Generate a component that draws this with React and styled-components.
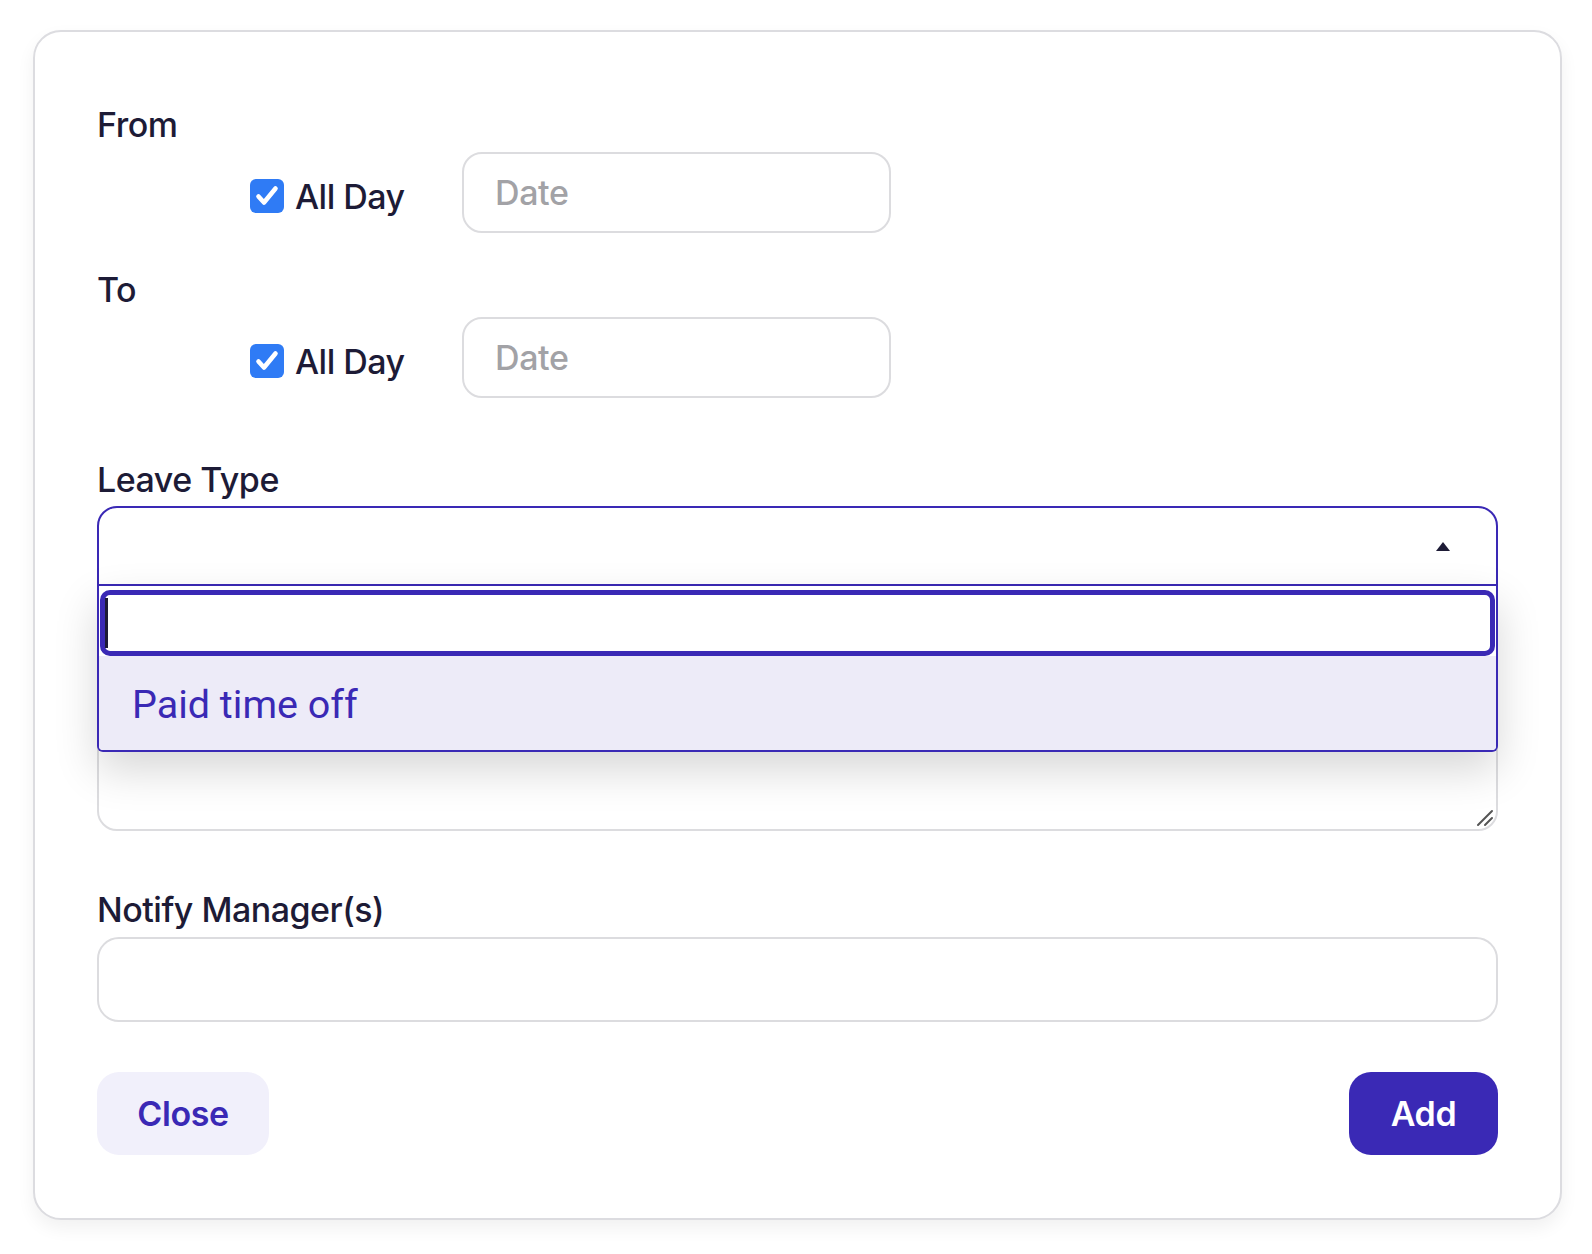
import React from "react";
import styled, { createGlobalStyle } from "styled-components";

const Global = createGlobalStyle`
  html, body { margin: 0; padding: 0; background: #ffffff; }
  body { font-family: Inter, "Noto Sans", sans-serif; color: #1d1b36; }
  * { box-sizing: border-box; }
`;

const INDIGO = "#3a29b5";

const Page = styled.div`
  padding: 30px 32px 36px 33px;
`;

const Card = styled.div`
  width: 1529px;
  border: 2px solid #dcdce0;
  border-radius: 28px;
  background: #fff;
  box-shadow: 0 8px 18px rgba(0, 0, 0, 0.06);
  padding: 70px 62px 63px 62px;
  display: flex;
  flex-direction: column;
`;

const Field = styled.div`
  display: flex;
  flex-direction: column;
  margin-top: ${(p) => p.$top || 0}px;
  position: relative;
`;

const Label = styled.div`
  font-size: 34px;
  font-weight: 500;
  letter-spacing: -0.5px;
  line-height: 45px;
  height: 45px;
  color: #1d1b36;
  margin-bottom: ${(p) => p.$gap ?? 5}px;
`;

const DateRow = styled.div`
  display: flex;
  align-items: center;
  padding-left: 153px;
`;

const CheckLabel = styled.label`
  display: flex;
  align-items: center;
  gap: 11px;
  padding-top: 7px;
  width: 212px;
  font-size: 34px;
  font-weight: 500;
  letter-spacing: -0.5px;
  color: #1d1b36;
`;

const CheckBox = styled.span`
  width: 34px;
  height: 34px;
  border-radius: 6px;
  background: #2f7bf5;
  display: flex;
  align-items: center;
  justify-content: center;
  flex-shrink: 0;
`;

const DateInput = styled.div`
  width: 429px;
  height: 81px;
  border: 2px solid #dcdcdf;
  border-radius: 20px;
  display: flex;
  align-items: center;
  padding-left: 31px;
  font-size: 34px;
  letter-spacing: -0.4px;
  color: #a2a2a6;
  font-weight: 500;
`;

const SelectBox = styled.div`
  height: 80px;
  border: 2px solid ${INDIGO};
  border-radius: 20px 20px 0 0;
  display: flex;
  align-items: center;
  justify-content: flex-end;
  padding-right: 46px;
  background: #fff;
`;

const Caret = styled.span`
  width: 0;
  height: 0;
  border-left: 7px solid transparent;
  border-right: 7px solid transparent;
  border-bottom: 9px solid #1d1b36;
`;

const Menu = styled.div`
  position: absolute;
  left: 0;
  right: 0;
  top: 129px;
  z-index: 2;
  background: #fff;
  border: 2px solid ${INDIGO};
  border-top: none;
  border-radius: 0 0 6px 6px;
  box-shadow: 0 18px 44px rgba(0, 0, 0, 0.16);
  padding-top: 4px;
  overflow: hidden;
`;

const SearchInput = styled.div`
  height: 66px;
  margin: 0 1px;
  border: 5px solid ${INDIGO};
  border-radius: 10px;
  background: #fff;
  display: flex;
  align-items: center;
`;

const Cursor = styled.span`
  width: 3px;
  height: 50px;
  background: #1d1b36;
`;

const Option = styled.div`
  height: 94px;
  background: #edebf8;
  color: ${INDIGO};
  font-family: Roboto, Inter, sans-serif;
  font-size: 39.5px;
  display: flex;
  align-items: center;
  padding-left: 33px;
  padding-top: 3px;
`;

const TextArea = styled.div`
  margin-top: 40px;
  height: 205px;
  border: 2px solid #dcdcdf;
  border-radius: 20px;
  position: relative;
`;

const Grip = styled.svg`
  position: absolute;
  right: 2px;
  bottom: 2px;
`;

const TextInput = styled.div`
  height: 85px;
  border: 2px solid #dcdcdf;
  border-radius: 22px;
`;

const Actions = styled.div`
  display: flex;
  justify-content: space-between;
  margin-top: 50px;
`;

const Button = styled.button`
  height: 83px;
  border: none;
  border-radius: 22px;
  font-family: Inter, sans-serif;
  font-size: 34px;
  font-weight: 600;
  letter-spacing: -0.4px;
  padding: 0;
  background: ${(p) => (p.$primary ? INDIGO : "#f1f0fb")};
  color: ${(p) => (p.$primary ? "#fff" : INDIGO)};
  width: ${(p) => p.$w}px;
`;

const Check = () => (
  <svg width="26" height="26" viewBox="0 0 26 26">
    <path d="M4.5 13.5 L10 19.5 L21.5 5.5" fill="none" stroke="#fff" strokeWidth="4.6" strokeLinecap="round" strokeLinejoin="round" />
  </svg>
);

const DateField = ({ label, top }) => (
  <Field $top={top}>
    <Label>{label}</Label>
    <DateRow>
      <CheckLabel>
        <CheckBox>
          <Check />
        </CheckBox>
        All Day
      </CheckLabel>
      <DateInput>Date</DateInput>
    </DateRow>
  </Field>
);

export default function App() {
  return (
    <>
      <Global />
      <Page>
        <Card>
          <DateField label="From" />
          <DateField label="To" top={34} />
          <Field $top={59}>
            <Label $gap={4}>Leave Type</Label>
            <SelectBox>
              <Caret />
            </SelectBox>
            <Menu>
              <SearchInput>
                <Cursor />
              </SearchInput>
              <Option>Paid time off</Option>
            </Menu>
            <TextArea>
              <Grip width="22" height="22" viewBox="0 0 22 22">
                <path d="M20 6 L6 20 M20 13 L13 20" stroke="#555" strokeWidth="2" strokeLinecap="round" />
              </Grip>
            </TextArea>
          </Field>
          <Field $top={56}>
            <Label>Notify Manager(s)</Label>
            <TextInput />
          </Field>
          <Actions>
            <Button $w={172}>Close</Button>
            <Button $primary $w={149}>Add</Button>
          </Actions>
        </Card>
      </Page>
    </>
  );
}
